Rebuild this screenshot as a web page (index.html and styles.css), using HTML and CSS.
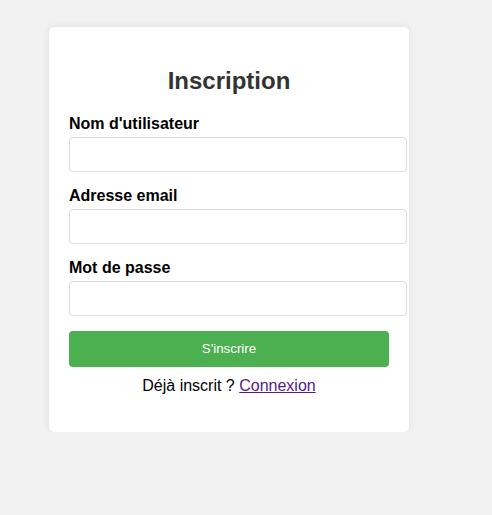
FILE: index.html
```html
<!DOCTYPE html>
<html lang="fr">
<head>
    <meta charset="UTF-8">
    <meta name="viewport" content="width=device-width, initial-scale=1.0">
    <title>Inscription</title>
    <link rel="stylesheet" href="styles.css">
</head>
<body>

    <div class="container">
        <h2>Inscription</h2>
        <form>
            <label for="username">Nom d'utilisateur</label>
            <input type="text" id="username" name="username">

            <label for="email">Adresse email</label>
            <input type="email" id="email" name="email">

            <label for="password">Mot de passe</label>
            <input type="password" id="password" name="password">

            <button type="submit">S'inscrire</button>
        </form>
        <p class="switch">Déjà inscrit ? <a href="#" class="visited">Connexion</a></p>
    </div>

</body>
</html>
```

FILE: styles.css
```css
body {
    font-family: "Liberation Sans", Arial, sans-serif;
    background-color: #f2f2f2;
    margin: 0;
}

.container {
    width: 320px;
    margin: 27px 0 0 49px;
    background: #fff;
    padding: 20px;
    border-radius: 5px;
    box-shadow: 0 0 8px rgba(0, 0, 0, 0.08);
}

h2 {
    text-align: center;
    color: #333;
    font-size: 24px;
    margin: 20px 0;
}

label {
    display: block;
    font-weight: bold;
    font-size: 16px;
    margin-bottom: 4px;
}

input {
    display: block;
    width: 100%;
    height: 17px;
    padding: 8px;
    margin: 0 0 15px;
    border: 1px solid #ddd;
    border-radius: 4px;
    font-family: "Liberation Sans", Arial, sans-serif;
    font-size: 13.33px;
}

button {
    display: block;
    width: 100%;
    padding: 10px;
    border: none;
    border-radius: 4px;
    background: #4caf50;
    color: white;
    font-family: "Liberation Sans", Arial, sans-serif;
    font-size: 13.33px;
    line-height: 16px;
    cursor: pointer;
}

button:hover {
    background: #45a049;
}

.switch {
    text-align: center;
    font-size: 16px;
    margin: 10px 0 17px;
}

.switch a.visited {
    color: #551a8b;
}
```
